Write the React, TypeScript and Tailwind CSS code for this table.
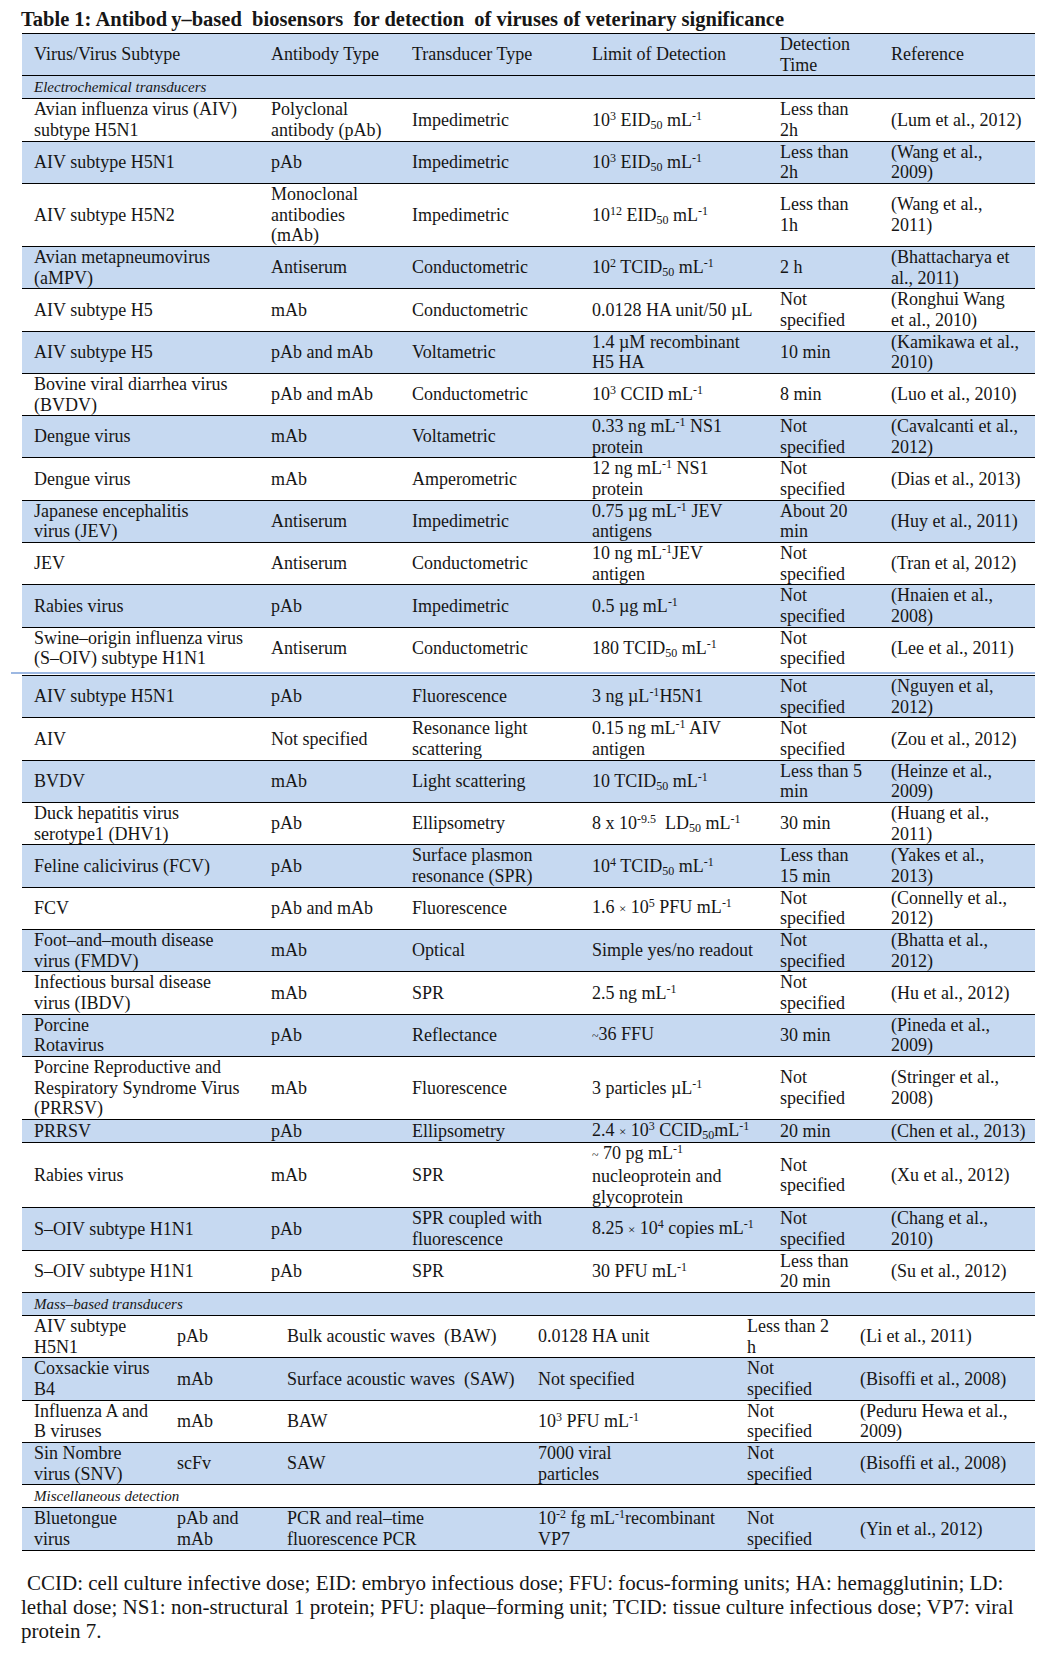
import type { ReactNode } from 'react';

type Cell = ReactNode | ReactNode[];

type Row = {
  cells: Cell[];
  blue?: boolean;
};

const Sup = ({ children }: { children: ReactNode }) => (
  <sup className="text-[12px]">{children}</sup>
);

const Sub = ({ children }: { children: ReactNode }) => (
  <sub className="text-[12px]">{children}</sub>
);

const mainRows: Row[] = [
  {
    cells: [
      ['Avian influenza virus (AIV)', 'subtype H5N1'],
      ['Polyclonal', 'antibody (pAb)'],
      'Impedimetric',
      <>10<Sup>3</Sup> EID<Sub>50</Sub> mL<Sup>-1</Sup></>,
      ['Less than', '2h'],
      '(Lum et al., 2012)',
    ],
  },
  {
    blue: true,
    cells: [
      'AIV subtype H5N1',
      'pAb',
      'Impedimetric',
      <>10<Sup>3</Sup> EID<Sub>50</Sub> mL<Sup>-1</Sup></>,
      ['Less than', '2h'],
      ['(Wang et al.,', '2009)'],
    ],
  },
  {
    cells: [
      'AIV subtype H5N2',
      ['Monoclonal', 'antibodies', '(mAb)'],
      'Impedimetric',
      <>10<Sup>12</Sup> EID<Sub>50</Sub> mL<Sup>-1</Sup></>,
      ['Less than', '1h'],
      ['(Wang et al.,', '2011)'],
    ],
  },
  {
    blue: true,
    cells: [
      ['Avian metapneumovirus', '(aMPV)'],
      'Antiserum',
      'Conductometric',
      <>10<Sup>2</Sup> TCID<Sub>50</Sub> mL<Sup>-1</Sup></>,
      '2 h',
      ['(Bhattacharya et', 'al., 2011)'],
    ],
  },
  {
    cells: [
      'AIV subtype H5',
      'mAb',
      'Conductometric',
      '0.0128 HA unit/50 µL',
      ['Not', 'specified'],
      ['(Ronghui Wang', 'et al., 2010)'],
    ],
  },
  {
    blue: true,
    cells: [
      'AIV subtype H5',
      'pAb and mAb',
      'Voltametric',
      ['1.4 µM recombinant', 'H5 HA'],
      '10 min',
      ['(Kamikawa et al.,', '2010)'],
    ],
  },
  {
    cells: [
      ['Bovine viral diarrhea virus', '(BVDV)'],
      'pAb and mAb',
      'Conductometric',
      <>10<Sup>3</Sup> CCID mL<Sup>-1</Sup></>,
      '8 min',
      '(Luo et al., 2010)',
    ],
  },
  {
    blue: true,
    cells: [
      'Dengue virus',
      'mAb',
      'Voltametric',
      [<>0.33 ng mL<Sup>-1</Sup> NS1</>, 'protein'],
      ['Not', 'specified'],
      ['(Cavalcanti et al.,', '2012)'],
    ],
  },
  {
    cells: [
      'Dengue virus',
      'mAb',
      'Amperometric',
      [<>12 ng mL<Sup>-1</Sup> NS1</>, 'protein'],
      ['Not', 'specified'],
      '(Dias et al., 2013)',
    ],
  },
  {
    blue: true,
    cells: [
      ['Japanese encephalitis', 'virus (JEV)'],
      'Antiserum',
      'Impedimetric',
      [<>0.75 µg mL<Sup>-1</Sup> JEV</>, 'antigens'],
      ['About 20', 'min'],
      '(Huy et al., 2011)',
    ],
  },
  {
    cells: [
      'JEV',
      'Antiserum',
      'Conductometric',
      [<>10 ng mL<Sup>-1</Sup>JEV</>, 'antigen'],
      ['Not', 'specified'],
      '(Tran et al, 2012)',
    ],
  },
  {
    blue: true,
    cells: [
      'Rabies virus',
      'pAb',
      'Impedimetric',
      <>0.5 µg mL<Sup>-1</Sup></>,
      ['Not', 'specified'],
      ['(Hnaien et al.,', '2008)'],
    ],
  },
];

const swineRow: Row = {
  cells: [
    ['Swine–origin influenza virus', '(S–OIV) subtype H1N1'],
    'Antiserum',
    'Conductometric',
    <>180 TCID<Sub>50</Sub> mL<Sup>-1</Sup></>,
    ['Not', 'specified'],
    '(Lee et al., 2011)',
  ],
};

const opticalRows: Row[] = [
  {
    blue: true,
    cells: [
      'AIV subtype H5N1',
      'pAb',
      'Fluorescence',
      <>3 ng µL<Sup>-1</Sup>H5N1</>,
      ['Not', 'specified'],
      ['(Nguyen et al,', '2012)'],
    ],
  },
  {
    cells: [
      'AIV',
      'Not specified',
      ['Resonance light', 'scattering'],
      [<>0.15 ng mL<Sup>-1</Sup> AIV</>, 'antigen'],
      ['Not', 'specified'],
      '(Zou et al., 2012)',
    ],
  },
  {
    blue: true,
    cells: [
      'BVDV',
      'mAb',
      'Light scattering',
      <>10 TCID<Sub>50</Sub> mL<Sup>-1</Sup></>,
      ['Less than 5', 'min'],
      ['(Heinze et al.,', '2009)'],
    ],
  },
  {
    cells: [
      ['Duck hepatitis virus', 'serotype1 (DHV1)'],
      'pAb',
      'Ellipsometry',
      <>8 x 10<Sup>-9.5</Sup>&nbsp; LD<Sub>50</Sub> mL<Sup>-1</Sup></>,
      '30 min',
      ['(Huang et al.,', '2011)'],
    ],
  },
  {
    blue: true,
    cells: [
      'Feline calicivirus (FCV)',
      'pAb',
      ['Surface plasmon', 'resonance (SPR)'],
      <>10<Sup>4</Sup> TCID<Sub>50</Sub> mL<Sup>-1</Sup></>,
      ['Less than', '15 min'],
      ['(Yakes et al.,', '2013)'],
    ],
  },
  {
    cells: [
      'FCV',
      'pAb and mAb',
      'Fluorescence',
      <>1.6 <span className="text-[13px]">×</span> 10<Sup>5</Sup> PFU mL<Sup>-1</Sup></>,
      ['Not', 'specified'],
      ['(Connelly et al.,', '2012)'],
    ],
  },
  {
    blue: true,
    cells: [
      ['Foot–and–mouth disease', 'virus (FMDV)'],
      'mAb',
      'Optical',
      'Simple yes/no readout',
      ['Not', 'specified'],
      ['(Bhatta et al.,', '2012)'],
    ],
  },
  {
    cells: [
      ['Infectious bursal disease', 'virus (IBDV)'],
      'mAb',
      'SPR',
      <>2.5 ng mL<Sup>-1</Sup></>,
      ['Not', 'specified'],
      '(Hu et al., 2012)',
    ],
  },
  {
    blue: true,
    cells: [
      ['Porcine', 'Rotavirus'],
      'pAb',
      'Reflectance',
      <><span className="text-[12px]">~</span>36 FFU</>,
      '30 min',
      ['(Pineda et al.,', '2009)'],
    ],
  },
  {
    cells: [
      ['Porcine Reproductive and', 'Respiratory Syndrome Virus', '(PRRSV)'],
      'mAb',
      'Fluorescence',
      <>3 particles µL<Sup>-1</Sup></>,
      ['Not', 'specified'],
      ['(Stringer et al.,', '2008)'],
    ],
  },
  {
    blue: true,
    cells: [
      'PRRSV',
      'pAb',
      'Ellipsometry',
      <>2.4 <span className="text-[13px]">×</span> 10<Sup>3</Sup> CCID<Sub>50</Sub>mL<Sup>-1</Sup></>,
      '20 min',
      '(Chen et al., 2013)',
    ],
  },
  {
    cells: [
      'Rabies virus',
      'mAb',
      'SPR',
      [<><span className="text-[12px]">~</span> 70 pg mL<Sup>-1</Sup></>, 'nucleoprotein and', 'glycoprotein'],
      ['Not', 'specified'],
      '(Xu et al., 2012)',
    ],
  },
  {
    blue: true,
    cells: [
      'S–OIV subtype H1N1',
      'pAb',
      ['SPR coupled with', 'fluorescence'],
      <>8.25 <span className="text-[13px]">×</span> 10<Sup>4</Sup> copies mL<Sup>-1</Sup></>,
      ['Not', 'specified'],
      ['(Chang et al.,', '2010)'],
    ],
  },
  {
    cells: [
      'S–OIV subtype H1N1',
      'pAb',
      'SPR',
      <>30 PFU mL<Sup>-1</Sup></>,
      ['Less than', '20 min'],
      '(Su et al., 2012)',
    ],
  },
];

const massRows: Row[] = [
  {
    cells: [
      ['AIV subtype', 'H5N1'],
      'pAb',
      'Bulk acoustic waves\u00a0 (BAW)',
      '0.0128 HA unit',
      ['Less than 2', 'h'],
      '(Li et al., 2011)',
    ],
  },
  {
    blue: true,
    cells: [
      ['Coxsackie virus', 'B4'],
      'mAb',
      'Surface acoustic waves\u00a0 (SAW)',
      'Not specified',
      ['Not', 'specified'],
      '(Bisoffi et al., 2008)',
    ],
  },
  {
    cells: [
      ['Influenza A and', 'B viruses'],
      'mAb',
      'BAW',
      <>10<Sup>3</Sup> PFU mL<Sup>-1</Sup></>,
      ['Not', 'specified'],
      ['(Peduru Hewa et al.,', '2009)'],
    ],
  },
  {
    blue: true,
    cells: [
      ['Sin Nombre', 'virus (SNV)'],
      'scFv',
      'SAW',
      ['7000 viral', 'particles'],
      ['Not', 'specified'],
      '(Bisoffi et al., 2008)',
    ],
  },
];

const miscRows: Row[] = [
  {
    blue: true,
    cells: [
      ['Bluetongue', 'virus'],
      ['pAb and', 'mAb'],
      ['PCR and real–time', 'fluorescence PCR'],
      [<>10<Sup>-2</Sup> fg mL<Sup>-1</Sup>recombinant</>, 'VP7'],
      ['Not', 'specified'],
      '(Yin et al., 2012)',
    ],
  },
];

const MAIN_COLS = 'grid-cols-[237px_141px_180px_188px_111px_1fr]';
const WIDE_COLS = 'grid-cols-[143px_110px_251px_209px_113px_1fr]';

function CellLines({ cell }: { cell: Cell }) {
  if (Array.isArray(cell)) {
    return (
      <div>
        {cell.map((line, i) => (
          <div key={i} className="whitespace-nowrap">
            {line}
          </div>
        ))}
      </div>
    );
  }
  return <div className="whitespace-nowrap">{cell}</div>;
}

function TableRow({ row, cols, border = true }: { row: Row; cols: string; border?: boolean }) {
  return (
    <div
      className={`grid ${cols} items-center pl-[12px] ${row.blue ? 'bg-[#c6d9f1]' : 'bg-white'} ${
        border ? 'border-b border-black' : ''
      }`}
    >
      {row.cells.map((cell, i) => (
        <CellLines key={i} cell={cell} />
      ))}
    </div>
  );
}

function SectionRow({ label, blue }: { label: string; blue?: boolean }) {
  return (
    <div
      className={`border-b border-black pl-[12px] text-[15px] italic leading-[22px] ${
        blue ? 'bg-[#c6d9f1]' : 'bg-white'
      }`}
    >
      {label}
    </div>
  );
}

export default function App() {
  return (
    <div className="min-h-[1655px] bg-white pl-[21px] pr-[25px] font-['Liberation_Serif',serif] text-[#161616]">
      <h1 className="whitespace-pre pt-[7px] text-[20.5px] font-bold leading-[24px]">
        Table 1: Antibod<span className="ml-[4px]">y</span>–based  biosensors  for detection  of viruses of
        veterinary significance
      </h1>

      <div className="ml-[1px] mt-[2px] border-t border-black text-[18px] leading-[20.65px]">
        <TableRow
          cols={MAIN_COLS}
          row={{
            blue: true,
            cells: [
              'Virus/Virus Subtype',
              'Antibody Type',
              'Transducer Type',
              'Limit of Detection',
              ['Detection', 'Time'],
              'Reference',
            ],
          }}
        />
        <SectionRow label="Electrochemical transducers" blue />
        {mainRows.map((row, i) => (
          <TableRow key={i} row={row} cols={MAIN_COLS} />
        ))}

        <div className="border-b border-black">
          <TableRow row={swineRow} cols={MAIN_COLS} border={false} />
          <div className="-ml-[11px] mt-[3px] mb-[1px] h-[2px] bg-[#9db8e2]" />
        </div>

        {opticalRows.map((row, i) => (
          <TableRow key={i} row={row} cols={MAIN_COLS} />
        ))}

        <SectionRow label="Mass–based transducers" blue />
        {massRows.map((row, i) => (
          <TableRow key={i} row={row} cols={WIDE_COLS} />
        ))}

        <SectionRow label="Miscellaneous detection" />
        {miscRows.map((row, i) => (
          <TableRow key={i} row={row} cols={WIDE_COLS} />
        ))}
      </div>

      <p className="mt-[20px] indent-[6px] font-['Liberation_Serif',serif] text-[21px] leading-[24px]">
        CCID: cell culture infective dose; EID: embryo infectious dose; FFU: focus-forming units; HA: hemagglutinin; LD:
        <br />
        lethal dose; NS1: non-structural 1 protein; PFU: plaque–forming unit; TCID: tissue culture infectious dose; VP7: viral
        <br />
        protein 7.
      </p>
    </div>
  );
}
